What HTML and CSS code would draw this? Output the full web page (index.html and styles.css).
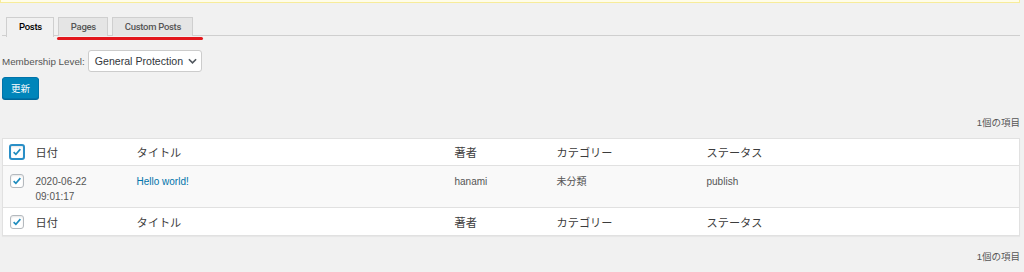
FILE: index.html
```html
<!DOCTYPE html>
<html lang="ja">
<head>
<meta charset="utf-8">
<link rel="stylesheet" href="styles.css">
</head>
<body>
<div class="notice"></div>
<div class="wrap">
  <nav class="tabs">
    <span class="tab active">Posts</span>
    <span class="tab">Pages</span>
    <span class="tab">Custom Posts</span>
    <span class="mark"></span>
  </nav>
  <div class="filter">
    <label class="lbl">Membership Level:</label>
    <span class="select">General Protection<svg class="chev" viewBox="0 0 10 6" width="9" height="6"><path d="M1 1l4 4 4-4" fill="none" stroke="#50575e" stroke-width="1.8"/></svg></span>
  </div>
  <button class="btn">更新</button>
  <div class="count">1個の項目</div>
  <table class="list">
    <colgroup><col class="c-cb"><col class="c-date"><col class="c-title"><col class="c-author"><col class="c-cat"><col></colgroup>
    <thead>
      <tr>
        <th><span class="cb focus"><svg viewBox="0 0 16 16"><path d="M3.5 8.2l3 3 6-7" fill="none" stroke="#1e8cbe" stroke-width="2.2"/></svg></span></th>
        <th>日付</th><th>タイトル</th><th>著者</th><th>カテゴリー</th><th>ステータス</th>
      </tr>
    </thead>
    <tbody>
      <tr>
        <td><span class="cb"><svg viewBox="0 0 16 16"><path d="M3.5 8.2l3 3 6-7" fill="none" stroke="#1e8cbe" stroke-width="2.2"/></svg></span></td>
        <td class="date">2020-06-22<br>09:01:17</td>
        <td><a class="link">Hello world!</a></td>
        <td>hanami</td>
        <td>未分類</td>
        <td>publish</td>
      </tr>
    </tbody>
    <tfoot>
      <tr>
        <th><span class="cb"><svg viewBox="0 0 16 16"><path d="M3.5 8.2l3 3 6-7" fill="none" stroke="#1e8cbe" stroke-width="2.2"/></svg></span></th>
        <th>日付</th><th>タイトル</th><th>著者</th><th>カテゴリー</th><th>ステータス</th>
      </tr>
    </tfoot>
  </table>
  <div class="count bottom">1個の項目</div>
</div>
</body>
</html>
```
FILE: styles.css
```css
* { box-sizing: border-box; }
html, body { margin: 0; padding: 0; }
body {
  background: #f1f1f1;
  font-family: "Liberation Sans", "Noto Sans CJK JP", sans-serif;
  color: #444;
  font-size: 10px;
  width: 1024px;
  height: 272px;
  overflow: hidden;
}
.notice {
  height: 3px;
  margin-right: 4px;
  background: #fffde9;
  border: 1px solid #f7ec9a;
  border-top: 0;
}
.wrap { padding: 0 4px 0 2px; }
.tabs {
  position: relative;
  display: flex;
  gap: 4px;
  margin-top: 14px;
  padding-left: 4px;
  border-bottom: 1px solid #cfcfcf;
  height: 19px;
}
.tab {
  display: block;
  height: 19px;
  padding: 0 11px 0 12px;
  line-height: 17px;
  font-family: "Roboto", "Liberation Sans", sans-serif;
  font-size: 9.5px;
  font-weight: 500;
  letter-spacing: -0.3px;
  color: #555;
  background: #e5e5e5;
  border: 1px solid #cfcfcf;
  border-bottom: 0;
}
.tab.active {
  background: #f1f1f1;
  color: #000;
  margin-bottom: -1px;
  height: 20px;
}
.mark {
  position: absolute;
  left: 55px;
  top: 20px;
  width: 146px;
  height: 3px;
  border-radius: 2px;
  background: #e3171d;
}
.filter {
  display: flex;
  align-items: center;
  gap: 3px;
  margin-top: 14px;
  height: 22px;
}
.lbl { font-size: 9.8px; color: #555; }
.select {
  display: flex;
  align-items: center;
  gap: 5px;
  height: 22px;
  width: 114px;
  padding: 0 0 0 6px;
  background: #fff;
  border: 1px solid #ccc;
  border-radius: 3px;
  font-size: 10.6px;
  color: #32373c;
}
.chev { display: block; }
.btn {
  display: block;
  margin-top: 5px;
  height: 22px;
  width: 37px;
  padding: 0;
  background: #0085ba;
  border: 1px solid #0073aa;
  border-radius: 3px;
  color: #fff;
  font-family: "Noto Sans CJK JP", sans-serif;
  font-size: 9.5px;
  box-shadow: 0 1px 0 #006799;
}
.count {
  text-align: right;
  font-size: 9.5px;
  color: #555;
  margin-top: 16px;
  height: 15px;
  line-height: 15px;
}
.list {
  width: 1018px;
  margin-top: 8px;
  border-collapse: collapse;
  table-layout: fixed;
  background: #fff;
  border: 1px solid #e1e1e1;
  box-shadow: 0 1px 1px rgba(0,0,0,0.04);
}
.c-cb { width: 31px; }
.c-date { width: 101px; }
.c-title { width: 318px; }
.c-author { width: 102px; }
.c-cat { width: 150px; }
.list th {
  text-align: left;
  font-weight: 400;
  font-size: 11.2px;
  color: #3c3c3c;
  font-family: "Noto Sans CJK JP", sans-serif;
  padding: 0 0 0 2px;
  height: 27px;
}
.list thead th { border-bottom: 1px solid #e1e1e1; }
.list tfoot th { border-top: 1px solid #e1e1e1; height: 28px; }
.list th:first-child, .list td:first-child { padding-left: 7px; }
.list tbody tr { background: #f9f9f9; }
.list td {
  vertical-align: top;
  font-size: 10px;
  color: #555;
  padding: 8px 0 0 2px;
  height: 42px;
  line-height: 15px;
}
.link { color: #0073aa; }
.cb {
  display: block;
  width: 14px;
  height: 14px;
  border: 1px solid #b4b9be;
  border-radius: 3px;
  background: #fff;
  box-shadow: inset 0 1px 2px rgba(0,0,0,0.1);
}
.cb svg { display: block; width: 12px; height: 12px; }
.cb.focus {
  width: 16px;
  height: 16px;
  margin-left: -1px;
  border: 2px solid #2a8fc7;
}
.bottom { margin-top: 13px; }
```
